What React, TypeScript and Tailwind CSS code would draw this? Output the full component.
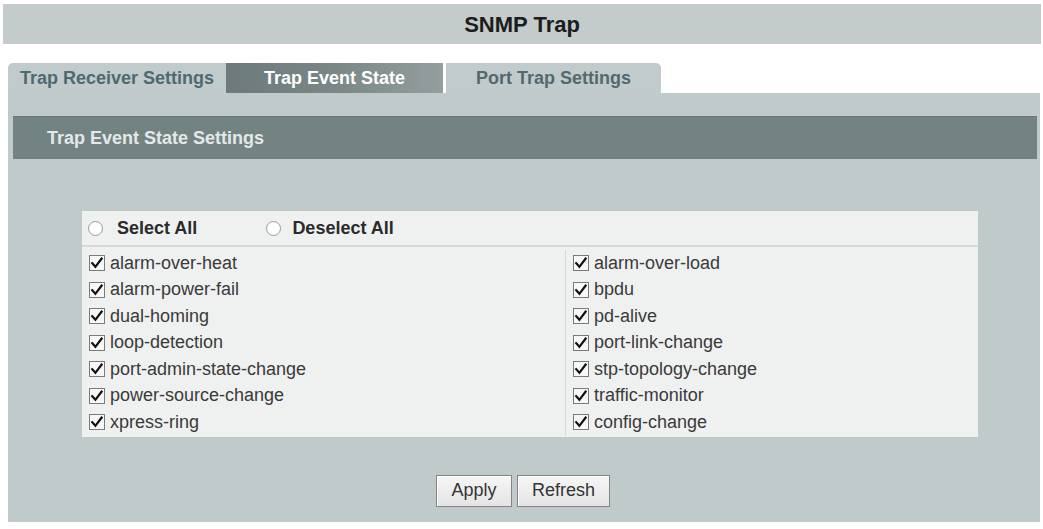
import React from 'react';

const leftEvents = [
  'alarm-over-heat',
  'alarm-power-fail',
  'dual-homing',
  'loop-detection',
  'port-admin-state-change',
  'power-source-change',
  'xpress-ring',
];

const rightEvents = [
  'alarm-over-load',
  'bpdu',
  'pd-alive',
  'port-link-change',
  'stp-topology-change',
  'traffic-monitor',
  'config-change',
];

const CheckBox: React.FC = () => (
  <svg width="16" height="16" viewBox="0 0 16 16" className="shrink-0">
    <rect x="0.5" y="0.5" width="15" height="15" fill="#f7f7f7" stroke="#7a7a7a" />
    <path d="M3.2 8.2 L6.4 11.8 L12.6 3.6" fill="none" stroke="#111" strokeWidth="2.2" strokeLinecap="square" />
  </svg>
);

const Radio: React.FC = () => (
  <span className="block w-[15px] h-[15px] rounded-full border border-[#9a9a9a] bg-white shrink-0" />
);

const EventRow: React.FC<{ label: string }> = ({ label }) => (
  <div className="h-[26.5px] flex items-center gap-[5px] pl-[7px]">
    <CheckBox />
    <span className="text-[18px] text-[#3a3a3a]">{label}</span>
  </div>
);

export default function App() {
  return (
    <div className="w-[1043px] h-[529px] bg-white pt-[4px] pl-[3px] font-['Liberation_Sans',Arial,sans-serif] overflow-hidden">
      <div className="w-[1038px] h-[40px] bg-[#c3cbcb] flex items-center justify-center text-[22px] font-bold text-[#1c1c1c]">
        SNMP Trap
      </div>

      <div className="mt-[19px] ml-[5px] flex h-[30px] text-[18px] font-bold">
        <div className="w-[218px] bg-[#c2cbcc] rounded-tl-[5px] flex items-center justify-center text-[#4d6a6f]">
          Trap Receiver Settings
        </div>
        <div className="w-[217px] bg-linear-to-r from-[#6d7a7a] via-[#7b8787] to-[#949e9e] flex items-center justify-center text-white">
          Trap Event State
        </div>
        <div className="ml-[3px] w-[215px] bg-[#c2cbcc] rounded-tr-[5px] flex items-center justify-center text-[#52696d]">
          Port Trap Settings
        </div>
      </div>

      <div className="ml-[5px] w-[1032px] h-[429px] bg-[#c1cacb] pt-[23px]">
        <div className="ml-[5px] mr-[3px] h-[43px] bg-[#738381] border-t border-[#667574] flex items-center pl-[34px] text-[18px] font-bold text-[#e3e9e9]">
          Trap Event State Settings
        </div>

        <div className="mt-[52px] ml-[74px] w-[896px] bg-[#eff1f1]">
          <div className="h-[36px] flex items-center pl-[6px] border-b-2 border-[#d3d8d8] text-[18px] font-bold text-[#2b2b2b]">
            <Radio />
            <span className="ml-[14px]">Select All</span>
            <span className="ml-[69px]">
              <Radio />
            </span>
            <span className="ml-[11px]">Deselect All</span>
          </div>
          <div className="flex pt-[3px] pb-[1px]">
            <div className="w-[484px] border-r border-[#d6dada]">
              {leftEvents.map((e) => (
                <EventRow key={e} label={e} />
              ))}
            </div>
            <div className="flex-1">
              {rightEvents.map((e) => (
                <EventRow key={e} label={e} />
              ))}
            </div>
          </div>
        </div>

        <div className="mt-[38px] flex justify-center gap-[5px] pr-[2px] text-[18px] text-[#333]">
          <button className="w-[76px] h-[32px] border border-[#848484] bg-linear-to-b from-[#f6f6f6] to-[#e4e4e4] shadow-[inset_1px_1px_0_#ffffff]">
            Apply
          </button>
          <button className="w-[93px] h-[32px] border border-[#848484] bg-linear-to-b from-[#f6f6f6] to-[#e4e4e4] shadow-[inset_1px_1px_0_#ffffff]">
            Refresh
          </button>
        </div>
      </div>
    </div>
  );
}
